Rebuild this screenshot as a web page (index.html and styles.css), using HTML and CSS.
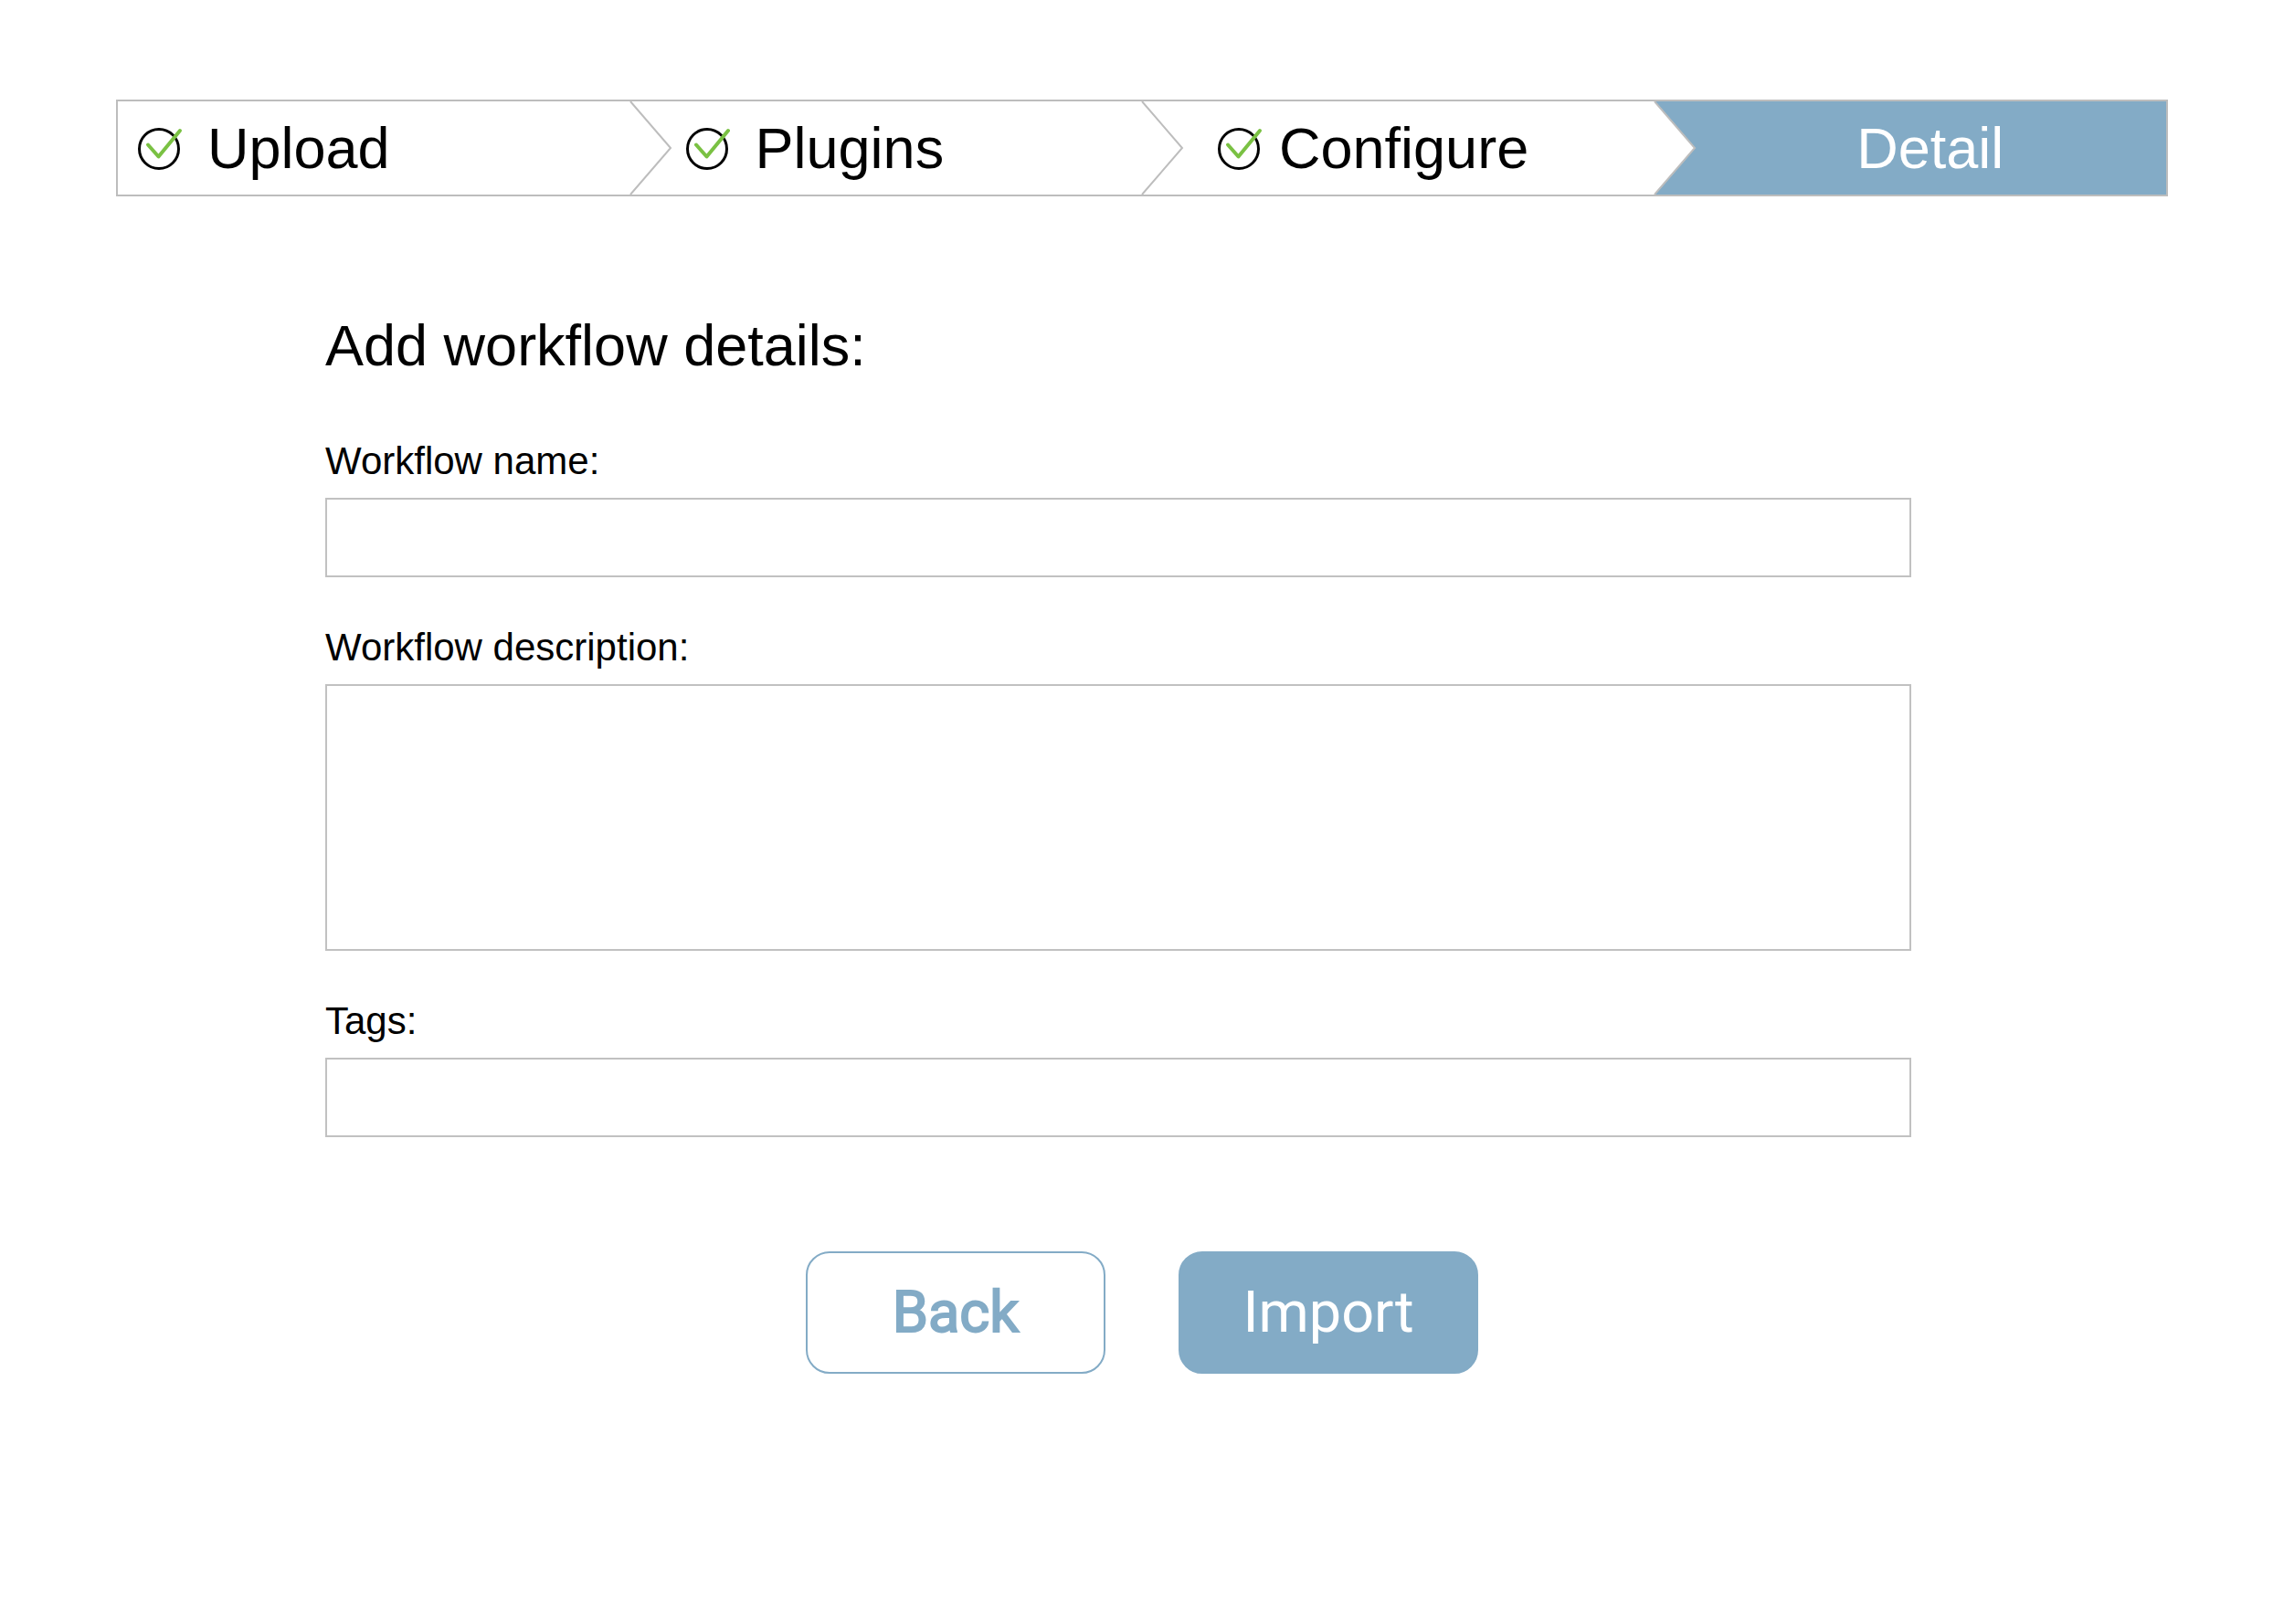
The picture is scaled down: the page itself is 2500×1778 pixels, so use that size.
FILE: index.html
```html
<!DOCTYPE html>
<html lang="en">
<head>
  <meta charset="utf-8">
  <title>Import workflow</title>
  <meta name="viewport" content="width=device-width, initial-scale=1">
  <link rel="stylesheet" href="styles.css">
</head>

<body>
  <svg class="symbols" aria-hidden="true">
    <symbol id="done" viewBox="0 0 50 50">
      <circle cx="24" cy="26" r="21.5" fill="none" stroke="#000" stroke-width="3"/>
      <path d="M12 21.500 23.500 34.500 47 6" fill="none" stroke="#7ac143" stroke-width="4" stroke-linecap="round" stroke-linejoin="round"/>
    </symbol>
    <symbol id="arrow" viewBox="0 0 48 102">
      <path d="M0 0H2L46 51 2 102H0Z" fill="#fff"/>
      <path d="M2 0 46 51 2 102" fill="none" stroke="#bdbdbd" stroke-width="2"/>
    </symbol>
  </svg>

  <ol class="steps">
    <li class="step">
      <svg class="check"><use href="#done"/></svg>
      <span>Upload</span>
    </li>
    <li class="step step-plugins">
      <svg class="arrow"><use href="#arrow"/></svg>
      <svg class="check"><use href="#done"/></svg>
      <span>Plugins</span>
    </li>
    <li class="step step-configure">
      <svg class="arrow"><use href="#arrow"/></svg>
      <svg class="check"><use href="#done"/></svg>
      <span>Configure</span>
    </li>
    <li class="step active" aria-current="step">
      <svg class="arrow"><use href="#arrow"/></svg>
      <span>Detail</span>
    </li>
  </ol>

  <form class="details">
    <h1>Add workflow details:</h1>

    <label for="name">Workflow name:</label>
    <input type="text" id="name" name="name">

    <label for="description">Workflow description:</label>
    <textarea id="description" name="description"></textarea>

    <label for="tags">Tags:</label>
    <input type="text" id="tags" name="tags">

    <div class="buttons">
      <button type="button" class="button back">Back</button>
      <button type="submit" class="button">Import</button>
    </div>
  </form>
</body>

</html>
```
FILE: styles.css
```css
* {
  box-sizing: border-box;
}
body {
  margin: 0;
  background-color: #fff;
  color: #000;
  font-family: "Liberation Sans", Arial, Helvetica, sans-serif;
}
.symbols {
  display: none;
}
.steps {
  display: grid;
  grid-template-columns: repeat(4, 1fr);
  margin: 109px 127px 0;
  padding: 0;
  border: 2px solid #bdbdbd;
  list-style: none;
  font-size: 63px;
  line-height: 72px;
}
.step {
  position: relative;
  display: flex;
  align-items: center;
  gap: 27px;
  height: 102px;
  padding-left: 21px;
}
.step-plugins {
  padding-left: 60px;
}
.step-configure {
  gap: 18px;
  padding-left: 82px;
}
.step.active {
  justify-content: center;
  padding-left: 44px;
  background-color: #83abc6;
  color: #fff;
}
.check {
  width: 50px;
  height: 50px;
}
.arrow {
  position: absolute;
  top: 0;
  left: -2px;
  width: 48px;
  height: 102px;
}
.details {
  margin: 0 auto;
  padding: 0 408px 0 356px;
}
h1 {
  margin: 127px 0 67px;
  font-size: 63px;
  font-weight: normal;
  line-height: 72px;
}
label {
  display: block;
  margin-bottom: 16px;
  font-size: 42px;
  line-height: 48px;
}
input,
textarea {
  display: block;
  width: 100%;
  height: 87px;
  margin: 0 0 53px;
  padding: 16px;
  border: 2px solid #c1c1c1;
  border-radius: 0;
  outline: none;
  background-color: #fff;
  font-family: inherit;
  font-size: 42px;
  resize: none;
}
textarea {
  height: 292px;
}
.buttons {
  display: flex;
  justify-content: center;
  gap: 80px;
  margin: 125px -52px 0 0;
}
.button {
  width: 328px;
  height: 134px;
  padding: 0;
  border: 2px solid #83abc6;
  border-radius: 26px;
  background-color: #83abc6;
  color: #fff;
  font-family: Roboto, "Liberation Sans", sans-serif;
  font-size: 63px;
  line-height: 72px;
}
.back {
  background-color: #fff;
  color: #83abc6;
  -webkit-text-stroke: 2px #83abc6;
}
```
